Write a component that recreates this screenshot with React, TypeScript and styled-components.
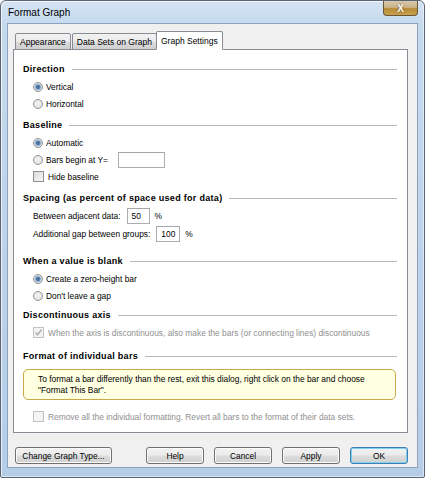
import React from 'react';
import styled, { createGlobalStyle } from 'styled-components';

const GlobalStyle = createGlobalStyle`
    html, body {
        margin: 0;
        padding: 0;
        background: #fff;
    }
    body {
        font-family: 'Liberation Sans', Arial, sans-serif;
        font-size: 8.4px;
        color: #000;
    }
`;

const Window = styled.div`
    width: 425px;
    height: 478px;
    box-sizing: border-box;
    border: 1px solid #5a6472;
    border-radius: 6px 6px 2px 2px;
    background: linear-gradient(180deg, #d3e3f3 0px, #c6daee 24px, #bcd2ea 60%, #b6cde8 100%);
    display: flex;
    flex-direction: column;
    padding: 0 6px 9px 6px;
    box-shadow: inset 1px 1px 0 rgba(255, 255, 255, 0.7), inset -1px -1px 0 rgba(255, 255, 255, 0.5);
`;

const TitleBar = styled.div`
    height: 22px;
    display: flex;
    align-items: center;
    justify-content: space-between;
`;

const Title = styled.span`
    font-size: 10px;
    padding-left: 1px;
    color: #000;
`;

const CloseButton = styled.div`
    width: 35px;
    height: 15px;
    margin-top: -7px;
    box-sizing: border-box;
    border: 1px solid #6a5636;
    border-top: none;
    border-radius: 0 0 4px 4px;
    background: linear-gradient(180deg, #d9c9ad 0%, #cbb38a 45%, #b48a34 55%, #c9a14c 100%);
    display: flex;
    align-items: center;
    justify-content: center;
    color: #fff;
    font-weight: bold;
    font-size: 10px;
    text-shadow: 0 0 2px #5a4420;
`;

const Client = styled.div`
    flex: 1;
    background: #f0f0f0;
    border: 1px solid #8da3bd;
    display: flex;
    flex-direction: column;
    padding: 7px 9px 0 5px;
`;

const TabStrip = styled.div`
    display: flex;
    align-items: flex-end;
    padding-left: 2px;
    height: 19px;
    margin-bottom: -1px;
    position: relative;
    z-index: 1;
`;

const Tab = styled.div<{ $active?: boolean }>`
    height: ${(p) => (p.$active ? '19px' : '17px')};
    box-sizing: border-box;
    padding: 0 ${(p) => (p.$active ? '4px' : '4px')};
    margin-left: ${(p) => (p.$active ? '-1px' : '1px')};
    border: 1px solid #898c95;
    border-bottom: ${(p) => (p.$active ? '1px solid #fff' : '1px solid #898c95')};
    border-radius: 2px 2px 0 0;
    background: ${(p) =>
        p.$active ? '#fff' : 'linear-gradient(180deg, #f2f2f2 0%, #ebebeb 50%, #dddddd 51%, #cfcfcf 100%)'};
    display: flex;
    align-items: center;
    font-size: 8.5px;
    &:first-child {
        margin-left: 0;
    }
`;

const Panel = styled.div`
    height: 384px;
    box-sizing: border-box;
    background: #fff;
    border: 1px solid #898c95;
    padding: 12px 10px 0 9px;
    display: flex;
    flex-direction: column;
`;

const Heading = styled.div<{ $top?: number }>`
    display: flex;
    align-items: center;
    height: 14px;
    margin-top: ${(p) => p.$top ?? 0}px;
    margin-bottom: 2px;
    font-weight: bold;
    font-size: 9px;
    letter-spacing: 0.3px;
    &::after {
        content: '';
        flex: 1;
        height: 1px;
        background: #b9b9b9;
        margin-left: 7px;
    }
`;

const Row = styled.div<{ $h?: number; $dim?: boolean; $top?: number }>`
    display: flex;
    align-items: center;
    height: ${(p) => p.$h ?? 17}px;
    margin-top: ${(p) => p.$top ?? 0}px;
    padding-left: 10px;
    color: ${(p) => (p.$dim ? '#8f8f8f' : '#000')};
`;

const Radio = styled.span<{ $on?: boolean }>`
    width: 10px;
    height: 10px;
    box-sizing: border-box;
    border-radius: 50%;
    border: 1px solid #959595;
    background: ${(p) =>
        p.$on
            ? 'radial-gradient(circle, #3e5f86 0px, #5d86b4 2px, #b6c9de 3px, #eaeaea 4px)'
            : 'radial-gradient(circle at 40% 40%, #f4f4f4 0px, #d9d9d9 100%)'};
    margin-right: 3px;
    flex-shrink: 0;
`;

const Check = styled.span<{ $dim?: boolean }>`
    width: 11px;
    height: 11px;
    box-sizing: border-box;
    border: 1px solid ${(p) => (p.$dim ? '#c2c2c2' : '#8e8f8f')};
    background: ${(p) => (p.$dim ? '#f4f4f4' : 'linear-gradient(135deg, #dcdcdc 0%, #f6f6f6 100%)')};
    margin-right: 4px;
    flex-shrink: 0;
    display: flex;
    align-items: center;
    justify-content: center;
`;

const Field = styled.span<{ $w: number; $ml?: number }>`
    width: ${(p) => p.$w}px;
    height: 16px;
    box-sizing: border-box;
    border: 1px solid #abadb3;
    border-top-color: #a3a6ad;
    background: #fff;
    margin-left: ${(p) => p.$ml ?? 0}px;
    padding-left: 4px;
    display: flex;
    align-items: center;
`;

const Unit = styled.span`
    margin-left: 5px;
`;

const Note = styled.div`
    margin: 4px 1px 0 0;
    height: 31px;
    box-sizing: border-box;
    border: 1px solid #c9a94a;
    border-radius: 5px;
    background: #ffffe1;
    padding: 4px 10px 0 14px;
    line-height: 10.5px;
`;

const ButtonBar = styled.div`
    display: flex;
    align-items: center;
    padding: 14px 0 0 2px;
`;

const Spacer = styled.div`
    flex: 1;
`;

const Button = styled.div<{ $w: number; $default?: boolean }>`
    width: ${(p) => p.$w}px;
    height: 17px;
    box-sizing: border-box;
    border: 1px solid ${(p) => (p.$default ? '#3c7fb1' : '#707070')};
    border-radius: 3px;
    background: linear-gradient(180deg, #f2f2f2 0%, #ebebeb 48%, #dddddd 52%, #cfcfcf 100%);
    box-shadow: ${(p) => (p.$default ? 'inset 0 0 0 1px #7fd0f5' : 'inset 0 0 0 1px #fcfcfc')};
    display: flex;
    align-items: center;
    justify-content: center;
    margin-left: 10px;
    &:first-child {
        margin-left: 0;
    }
`;

const CheckMark = () => (
    <svg width="9" height="9" viewBox="0 0 9 9">
        <polyline points="1.5,4.5 3.5,6.8 7.5,1.8" fill="none" stroke="#b0b0b0" strokeWidth="1.5" />
    </svg>
);

export default function App() {
    return (
        <>
            <GlobalStyle />
            <Window>
                <TitleBar>
                    <Title>Format Graph</Title>
                    <CloseButton>X</CloseButton>
                </TitleBar>
                <Client>
                    <TabStrip>
                        <Tab>Appearance</Tab>
                        <Tab>Data Sets on Graph</Tab>
                        <Tab $active>Graph Settings</Tab>
                    </TabStrip>
                    <Panel>
                        <Heading>Direction</Heading>
                        <Row>
                            <Radio $on />
                            Vertical
                        </Row>
                        <Row>
                            <Radio />
                            Horizontal
                        </Row>

                        <Heading $top={6}>Baseline</Heading>
                        <Row>
                            <Radio $on />
                            Automatic
                        </Row>
                        <Row>
                            <Radio />
                            Bars begin at Y=
                            <Field $w={47} $ml={10} />
                        </Row>
                        <Row>
                            <Check />
                            Hide baseline
                        </Row>

                        <Heading $top={6}>Spacing (as percent of space used for data)</Heading>
                        <Row $h={18}>
                            Between adjacent data:
                            <Field $w={23} $ml={6}>50</Field>
                            <Unit>%</Unit>
                        </Row>
                        <Row $h={18}>
                            Additional gap between groups:
                            <Field $w={24} $ml={6}>100</Field>
                            <Unit>%</Unit>
                        </Row>

                        <Heading $top={11}>When a value is blank</Heading>
                        <Row>
                            <Radio $on />
                            Create a zero-height bar
                        </Row>
                        <Row>
                            <Radio />
                            Don't leave a gap
                        </Row>

                        <Heading $top={4}>Discontinuous axis</Heading>
                        <Row $dim>
                            <Check $dim>
                                <CheckMark />
                            </Check>
                            When the axis is discontinuous, also make the bars (or connecting lines) discontinuous
                        </Row>

                        <Heading $top={8}>Format of individual bars</Heading>
                        <Note>
                            To format a bar differently than the rest, exit this dialog, right click on the bar and choose
                            <br />
                            "Format This Bar".
                        </Note>
                        <Row $dim $top={8}>
                            <Check $dim />
                            Remove all the individual formatting. Revert all bars to the format of their data sets.
                        </Row>
                    </Panel>
                    <ButtonBar>
                        <Button $w={97}>Change Graph Type...</Button>
                        <Spacer />
                        <Button $w={58}>Help</Button>
                        <Button $w={58}>Cancel</Button>
                        <Button $w={58}>Apply</Button>
                        <Button $w={58} $default>
                            OK
                        </Button>
                    </ButtonBar>
                </Client>
            </Window>
        </>
    );
}
